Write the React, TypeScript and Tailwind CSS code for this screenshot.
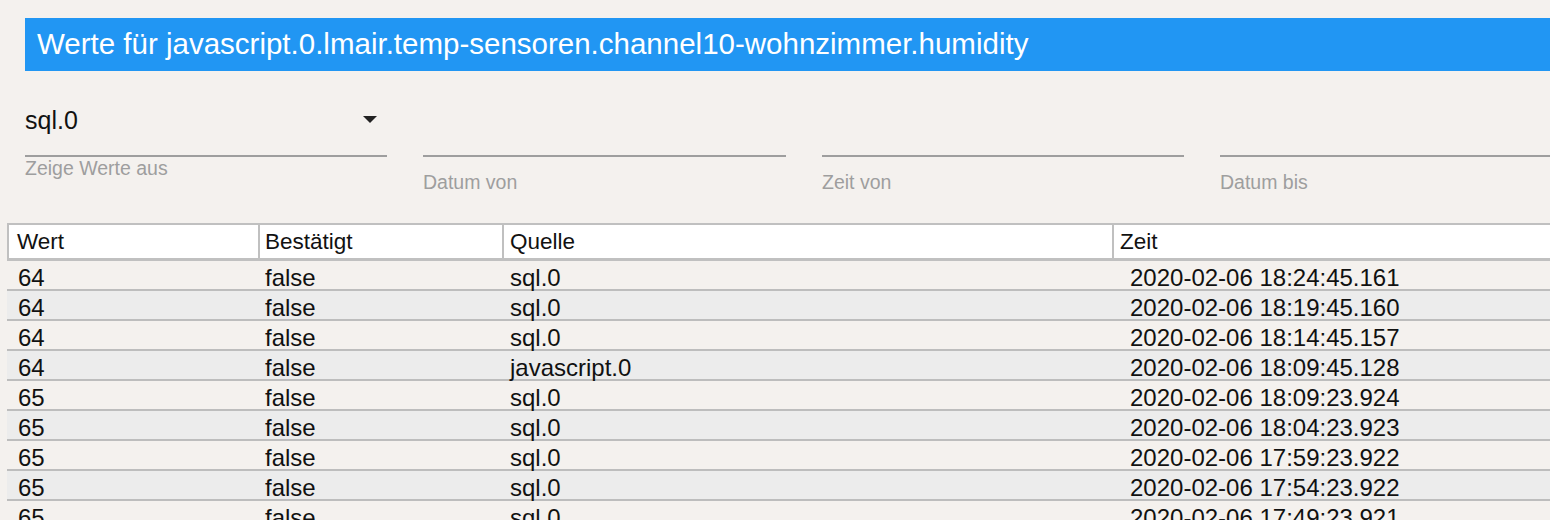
import React from 'react'

const rows = [
  ['64', 'false', 'sql.0', '2020-02-06 18:24:45.161'],
  ['64', 'false', 'sql.0', '2020-02-06 18:19:45.160'],
  ['64', 'false', 'sql.0', '2020-02-06 18:14:45.157'],
  ['64', 'false', 'javascript.0', '2020-02-06 18:09:45.128'],
  ['65', 'false', 'sql.0', '2020-02-06 18:09:23.924'],
  ['65', 'false', 'sql.0', '2020-02-06 18:04:23.923'],
  ['65', 'false', 'sql.0', '2020-02-06 17:59:23.922'],
  ['65', 'false', 'sql.0', '2020-02-06 17:54:23.922'],
  ['65', 'false', 'sql.0', '2020-02-06 17:49:23.921'],
]

function DateField({ label, width }: { label: string; width: string }) {
  return (
    <div className={'flex flex-col ' + width}>
      <div className="h-[86px] border-b-2 border-[#9e9e9e]" />
      <div className="mt-[14px] text-[19.5px] leading-[22px] text-[#9e9e9e]">{label}</div>
    </div>
  )
}

export default function App() {
  return (
    <div className="w-[1550px] h-[520px] overflow-hidden bg-[#f4f1ee] font-['Liberation_Sans',Arial,sans-serif] text-[#111]">
      <div className="pt-[18px] pl-[25px]">
        <div className="h-[53px] bg-[#2196f3] pl-3 flex items-center text-white text-[29.5px]">
          Werte für javascript.0.lmair.temp-sensoren.channel10-wohnzimmer.humidity
        </div>
      </div>

      <div className="flex pl-[25px] gap-[36px] h-[152px]">
        <div className="flex flex-col w-[362px]">
          <div className="h-[86px] border-b-2 border-[#9e9e9e] flex items-end justify-between pb-[20px]">
            <span className="text-[25px] leading-[30px]">sql.0</span>
            <svg width="14" height="8" viewBox="0 0 14 8" className="mr-[10px] mb-[11px]">
              <path d="M0 0h14L7 7z" fill="#222" />
            </svg>
          </div>
          <div className="text-[19.5px] leading-[22px] text-[#9e9e9e]">Zeige Werte aus</div>
        </div>
        <DateField label="Datum von" width="w-[363px]" />
        <DateField label="Zeit von" width="w-[362px]" />
        <DateField label="Datum bis" width="flex-1" />
      </div>

      <div className="ml-[7px]">
        <div className="flex h-[38px] bg-white border-t-2 border-b-[3px] border-[#c0c0c0] text-[22.5px]">
          <div className="w-[251px] border-l-2 border-[#c0c0c0] pl-2 flex items-center">Wert</div>
          <div className="w-[244px] border-l-2 border-[#c0c0c0] pl-[5px] flex items-center">Bestätigt</div>
          <div className="w-[610px] border-l-2 border-[#c0c0c0] pl-[6px] flex items-center">Quelle</div>
          <div className="flex-1 border-l-2 border-[#c0c0c0] pl-[6px] flex items-center">Zeit</div>
        </div>
        {rows.map((r, i) => (
          <div
            key={i}
            className={
              'flex h-[30px] border-b-2 border-[#bdbdbd] pt-[3px] text-[24px] leading-[27px] ' +
              (i % 2 === 1 ? 'bg-[#ececec]' : 'bg-[#f4f1ee]')
            }
          >
            <div className="w-[251px] pl-[11px]">{r[0]}</div>
            <div className="w-[244px] pl-[7px]">{r[1]}</div>
            <div className="w-[610px] pl-[8px]">{r[2]}</div>
            <div className="flex-1 pl-[18px]">{r[3]}</div>
          </div>
        ))}
      </div>
    </div>
  )
}
